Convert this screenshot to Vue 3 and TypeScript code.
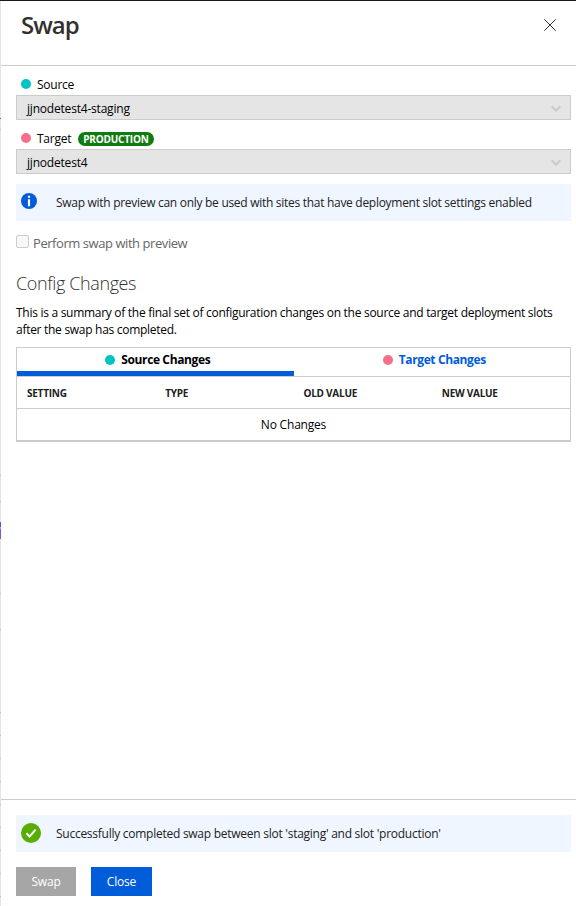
<script setup lang="ts">
interface SlotField { label: string; value: string; kind: 'source' | 'target'; badge?: string }

const fields: SlotField[] = [
  { label: 'Source', value: 'jjnodetest4-staging', kind: 'source' },
  { label: 'Target', value: 'jjnodetest4', kind: 'target', badge: 'PRODUCTION' },
]
const columns: string[] = ['SETTING', 'TYPE', 'OLD VALUE', 'NEW VALUE']
</script>

<template>
  <main class="blade">
    <div class="edge"></div>
    <div class="panel">
      <header class="header">
        <h1>Swap</h1>
        <svg class="dismiss" width="12" height="12" viewBox="0 0 12 12"><path d="M.3.3l11.4 11.4M11.7.3L.3 11.7" /></svg>
      </header>

      <section class="content">
        <div v-for="f in fields" :key="f.label" class="field">
          <div class="label">
            <i class="dot" :class="f.kind"></i>
            <span class="label-text">{{ f.label }}</span>
            <span v-if="f.badge" class="badge">{{ f.badge }}</span>
          </div>
          <div class="select">
            <span class="select-text">{{ f.value }}</span>
            <svg width="10" height="8" viewBox="0 0 10 8"><path d="M.7 1.4L5 5.7l4.3-4.3" /></svg>
          </div>
        </div>

        <div class="notice info">
          <svg width="16" height="16" viewBox="0 0 16 16">
            <circle cx="8" cy="8" r="8" fill="#015cda" />
            <path d="M6.9 2.8h2.2v2H6.9zM6.9 6.2h2.2v7H6.9z" fill="#fff" />
          </svg>
          <span class="info-text">Swap with preview can only be used with sites that have deployment slot settings enabled</span>
        </div>

        <div class="check"><i class="box"></i><span class="check-text">Perform swap with preview</span></div>

        <h2>Config Changes</h2>
        <p>This is a summary of the final set of configuration changes on the source and target deployment slots<br>after the swap has completed.</p>

        <div class="table">
          <div class="tabs">
            <div class="tab active"><i class="dot source"></i><span>Source Changes</span></div>
            <div class="tab"><i class="dot target"></i><span>Target Changes</span></div>
          </div>
          <div class="columns"><span v-for="c in columns" :key="c">{{ c }}</span></div>
          <div class="empty">No Changes</div>
        </div>
      </section>

      <footer class="footer">
        <div class="notice success">
          <svg width="20" height="20" viewBox="0 0 20 20">
            <circle cx="10" cy="10" r="10" fill="#57ad00" />
            <path d="M5.4 10.2l3.2 3.3 6-6.9" fill="none" stroke="#fff" stroke-width="2" />
          </svg>
          <span class="success-text">Successfully completed swap between slot 'staging' and slot 'production'</span>
        </div>
        <div class="actions">
          <button class="swap" disabled>Swap</button>
          <button class="close">Close</button>
        </div>
      </footer>
    </div>
  </main>
</template>

<style>
body { margin: 0; background: #fff; }
</style>

<style scoped>
* { box-sizing: border-box; }
.blade { width: 576px; height: 906px; display: flex; border-top: 1px solid #1b1a19; font: 12px/16px "Open Sans", "Noto Sans", sans-serif; color: #000; overflow: hidden; }
.edge {
  width: 1px; flex: none;
  background:
    linear-gradient(#1684d8, #1684d8) 0 117px / 1px 1px no-repeat,
    linear-gradient(#bbb, #bbb) 0 128px / 1px 1px no-repeat,
    linear-gradient(#bbb, #bbb) 0 474px / 1px 1px no-repeat,
    linear-gradient(#bbb, #bbb) 0 500px / 1px 1px no-repeat,
    linear-gradient(#6b4bcb 5px, #b79be5 5px, #b79be5 7px, #8a55d3 7px) 0 521px / 1px 17px no-repeat,
    linear-gradient(#bbb, #bbb) 0 592px / 1px 1px no-repeat,
    linear-gradient(#bbb, #bbb) 0 628px / 1px 1px no-repeat,
    linear-gradient(#bbb, #bbb) 0 711px / 1px 1px no-repeat,
    linear-gradient(#bbb, #bbb) 0 734px / 1px 1px no-repeat,
    linear-gradient(#bbb, #bbb) 0 757px / 1px 1px no-repeat,
    linear-gradient(#bbb, #bbb) 0 780px / 1px 1px no-repeat,
    linear-gradient(#bbb, #bbb) 0 803px / 1px 1px no-repeat,
    linear-gradient(#bbb, #bbb) 0 826px / 1px 1px no-repeat,
    linear-gradient(#bbb, #bbb) 0 849px / 1px 1px no-repeat,
    linear-gradient(#bbb, #bbb) 0 872px / 1px 1px no-repeat,
    linear-gradient(#bbb, #bbb) 0 895px / 1px 1px no-repeat,
    #e4e4e4;
}
.panel { flex: 1; min-width: 0; display: flex; flex-direction: column; }
.header { height: 65px; border-bottom: 1px solid #ccc; padding: 8px 20px 0; display: flex; justify-content: space-between; align-items: flex-start; }
h1 { margin: 0; font-size: 24px; line-height: 32px; font-weight: 600; color: #323130; letter-spacing: -1px; }
.dismiss { margin: 10px 0 0; stroke: #323130; stroke-width: 1; fill: none; }
.content { flex: 1; padding: 10px 5px 0 15px; }
.field { height: 54px; }
.label { height: 19px; display: flex; align-items: center; padding: 0 0 3px 5px; }
.dot { width: 10px; height: 10px; border-radius: 50%; flex: none; }
.dot.source { background: #00c4c4; }
.dot.target { background: #f87088; }
.label-text { margin-left: 6px; letter-spacing: -0.25px; padding-top: 1px; }
.badge { height: 14px; margin: 2px 0 0 7px; padding: 0 5px; border-radius: 7px; background: #107c10; color: #fff; font-size: 10px; line-height: 14px; font-weight: 700; letter-spacing: -.2px; }
.select { height: 25px; border: 1px solid #ccc; background: #e5e5e5; display: flex; justify-content: space-between; align-items: center; padding: 3px 9px 0 10px; letter-spacing: -.2px; }
.select svg { fill: none; stroke: #c8c8c8; stroke-width: 2; }
.notice { height: 37px; background: #eff6ff; display: flex; align-items: center; color: #212121; white-space: nowrap; letter-spacing: -.275px; }
.info { padding: 0 0 0 5px; letter-spacing: -.29px; }
.info svg { margin: 0 19px 3px 0; }
.success { padding-left: 5px; letter-spacing: -.26px; }
.success svg { margin: 0 15px 1px 0; }
.check { height: 16px; margin-top: 14px; display: flex; gap: 4px; font-size: 13px; color: #666; letter-spacing: -.44px; }
.box { width: 13px; height: 13px; border: 1px solid #ccc; border-radius: 2px; background: #f8f8f8; }
h2 { margin: 20px 0 0; font-size: 18px; line-height: 24px; font-weight: 300; color: #323130; letter-spacing: -.38px; }
p { margin: 9px 0 0; line-height: 17px; white-space: nowrap; letter-spacing: -.285px; }
.table { height: 95px; margin-top: 9px; border: 1px solid #ccc; border-bottom-width: 2px; }
.tabs { display: flex; height: 29px; border-bottom: 1px solid #ccc; }
.tab { width: 50%; height: 28px; display: flex; justify-content: center; align-items: center; gap: 6px; color: #015cda; font-weight: 700; letter-spacing: -.38px; padding: 1px 0 5px 5px; }
.tab.active { color: #000; border-bottom: 5px solid #015cda; padding-bottom: 0; }
.columns { height: 32px; display: grid; grid-template-columns: repeat(4, 1fr); align-items: center; border-bottom: 1px solid #ccc; font-size: 10px; font-weight: 700; letter-spacing: -.25px; color: #212121; }
.columns span { padding-left: 10px; padding-top: 1px; }
.empty { height: 31px; display: flex; align-items: center; justify-content: center; letter-spacing: -.2px; }
.footer { height: 107px; border-top: 1px solid #ccc; padding: 15px 5px 0 15px; }
.actions { display: flex; gap: 15px; margin-top: 15px; }
button { height: 29px; width: 61px; padding: 0; border: 0; font: inherit; color: #fff; background: #015cda; letter-spacing: -.2px; }
button.swap { width: 60px; background: #a6a6a6; }
</style>
